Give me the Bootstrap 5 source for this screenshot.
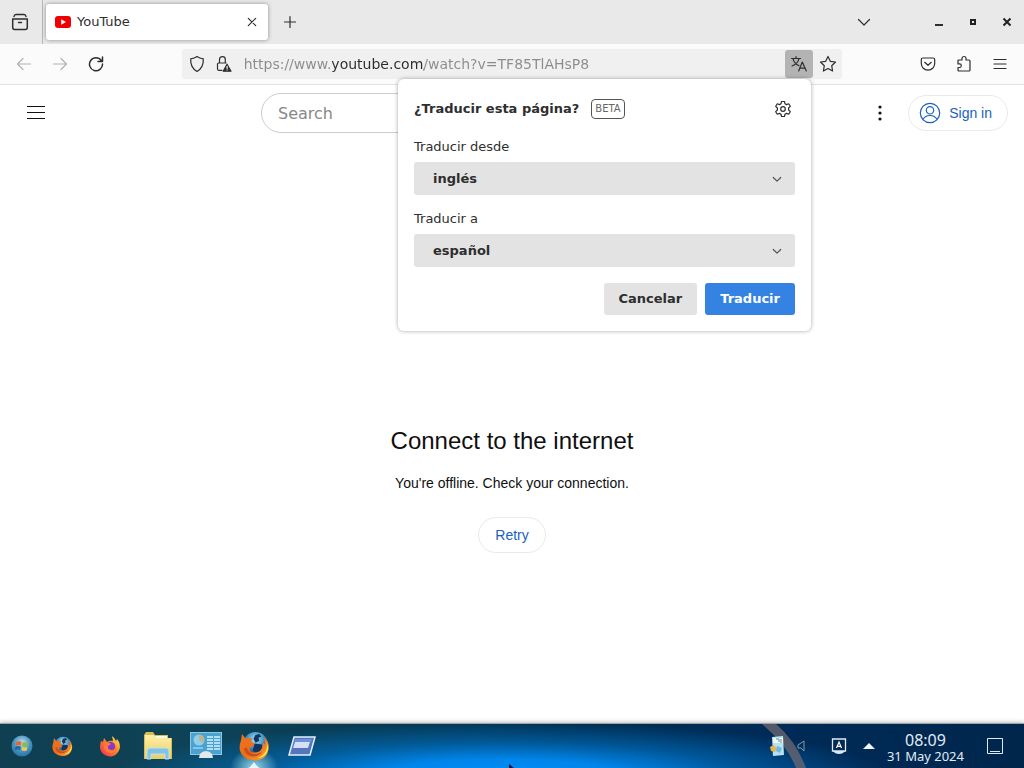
<!DOCTYPE html>
<html lang="es">
<head>
<meta charset="utf-8">
<meta name="viewport" content="width=device-width, initial-scale=1">
<title>YouTube</title>
<link href="https://cdn.jsdelivr.net/npm/bootstrap@5.3.0/dist/css/bootstrap.min.css" rel="stylesheet">
<style>
  :root { --chrome-font: "DejaVu Sans", sans-serif; --page-font: "Liberation Sans", Arial, sans-serif; --ink: #2e2e2e; --link: #1a62bd; }
  body { font-family: var(--page-font); color: #0f0f0f; background: #fff; }
  svg { display: block; flex: none; }
  .line-icon { fill: none; stroke: currentColor; stroke-width: 1.2; stroke-linecap: round; stroke-linejoin: round; }
  .browser-chrome { font-family: var(--chrome-font); font-size: 14px; color: var(--ink); position: relative; z-index: 10; }
  .tab-strip { height: 44px; background: #e9e9e9; }
  .icon-button { background: none; border: 0; padding: 0; color: inherit; display: flex; align-items: center; justify-content: center; flex: none; width: 36px; height: 28px; border-radius: 3px; }
  .view-button { width: 43px; height: 44px; border-right: 1px solid #b9b9b9; border-radius: 0; padding-right: 2px; }
  .page-tab { width: 222px; height: 36px; background: #fff; border-radius: 3px; box-shadow: 0 0 4px rgba(0,0,0,.4); font-size: 13px; margin-left: 3px; padding: 0 4px 0 9px; }
  .tab-name { margin-left: 6px; }
  .tabs-menu { margin-right: 32px; }
  .window-button { width: 34px; }
  .toolbar-row { height: 41px; background: #fbfbfb; border-bottom: 1px solid #e1e1e1; }
  .address { height: 30px; background: #f0f0f0; border-radius: 3px; position: relative; margin-left: 9px; }
  .address-input { border: 0; outline: 0; padding: 0; height: 28px; font-size: 14px; color: transparent; background: linear-gradient(90deg, #8b8b8b 88px, #2b2b2b 88px 180px, #8b8b8b 180px); -webkit-background-clip: text; background-clip: text; }
  .translate-toggle { width: 28px; background: #b3b3b3; }
  .nav-tools { padding-right: 6px; }
  .faded { opacity: .35; }
  .translate-panel { position: absolute; right: 31px; top: 30px; width: 413px; padding: 18px 16px 16px; background: #fff; border-radius: 6px; box-shadow: 0 0 4px rgba(0,0,0,.35); font-size: 13px; }
  .panel-head { margin-bottom: 14px; gap: 12px; }
  .panel-title { font-weight: 700; line-height: 24px; }
  .beta-tag { font-size: 10px; line-height: 18px; border: 1px solid #555; border-radius: 4px; padding: 0 3px; color: #666; }
  .panel-label { line-height: 24px; margin-bottom: 3px; }
  .language-select { appearance: none; border: 0; border-radius: 3px; background: #e3e3e3; color: var(--ink); font-weight: 700; height: 33px; width: 100%; padding: 0 19px; }
  .select-wrap { position: relative; margin-bottom: 12px; }
  .select-wrap svg { position: absolute; right: 13px; top: 12px; pointer-events: none; color: #555; }
  .panel-button { height: 32px; border: 0; border-radius: 3px; background: #e3e3e3; color: var(--ink); font-weight: 700; padding: 0 15px; }
  .panel-button.go { background: #3482e2; color: #fff; }
  .masthead { height: 56px; padding: 0 16px; }
  .search-box { font-family: var(--chrome-font); font-size: 16px; height: 40px; width: calc(50% + 6px); border: 1px solid #ccc; border-radius: 20px; padding: 0 16px; }
  .search-box::placeholder { color: #888; opacity: 1; }
  .pill { border: 1px solid #e9e9e9; border-radius: 20px; background: #fff; color: var(--link); font-size: 14px; height: 36px; padding: 0 16px; }
  .sign-link { padding: 0 15px 0 10px; text-decoration: none; }
  .offline { margin-bottom: 170px; }
  .offline h1 { font-size: 24px; font-weight: 400; line-height: 32px; margin-bottom: 16px; }
  .offline p { font-size: 14px; line-height: 20px; margin-bottom: 24px; }
  .desk-bar { height: 45px; position: relative; border-top: 1px solid #9da5a8; box-shadow: 0 -1px 4px rgba(0,0,0,.25); color: #e2ebf5; font-family: "Noto Sans", sans-serif;
    background: radial-gradient(ellipse 38% 125% at 49% 120%, #0090ff 0, #0085ea 32%, rgba(0,110,190,.65) 62%, rgba(0,70,130,0) 100%),
      linear-gradient(90deg, #0f3f51 0, #0e4357 20%, #083b52 34%, #002f50 55%, #002b58 75%, #00264c 100%); }
  .launch { width: 48px; height: 44px; }
  .start-button { width: 38px; padding-left: 6px; }
  .light-ray { position: absolute; right: 0; bottom: 0; width: 270px; height: 44px; pointer-events: none; }
  .pointer-tip { position: absolute; left: 50%; bottom: 0; margin-left: -4px; }
  .active-app { position: relative; background: radial-gradient(ellipse 24px 20px at 50% 100%, #9bd7e5 0, rgba(80,170,200,0) 100%); }
  .active-mark { position: absolute; left: 50%; bottom: 0; margin-left: -6px; }
  .tray { position: relative; padding-right: 21px; }
  .clock { margin: 0 23px 0 12px; }
  .clock-time { font-size: 16px; line-height: 20px; }
  .clock-date { font-size: 13px; line-height: 13px; }
</style>
</head>
<body class="d-flex flex-column min-vh-100">
<header class="browser-chrome">
  <div class="tab-strip d-flex align-items-center">
    <button class="icon-button view-button" aria-label="Vista de Firefox"><svg class="line-icon" style="stroke-width:1.500" width="18" height="18" viewBox="0 0 18 18"><path d="M5 1.500h8Q14.700 1.500 15 3.500M5 1.500Q3.300 1.500 3 3.500"/><path d="M1.700 6h14.600v8.500q0 2-2 2H3.700q-2 0-2-2zM7.500 9.500h3"/></svg></button>
    <div class="page-tab d-flex align-items-center">
      <svg width="16" height="16" viewBox="0 0 16 16"><rect y="2" width="16" height="12" rx="3" fill="#f00000"/><path d="M6.200 5.200v5.600L11 8z" fill="#fff"/></svg>
      <span class="tab-name">YouTube</span>
      <button class="icon-button ms-auto" style="width:24px" aria-label="Cerrar pestaña"><svg class="line-icon" width="10" height="10" viewBox="0 0 10 10"><path d="M1.300 1.300l7.400 7.400M8.700 1.300L1.300 8.700"/></svg></button>
    </div>
    <button class="icon-button ms-1" aria-label="Nueva pestaña"><svg class="line-icon" width="14" height="14" viewBox="0 0 14 14"><path d="M7 1.500v11M1.500 7h11"/></svg></button>
    <button class="icon-button tabs-menu ms-auto" aria-label="Listar pestañas"><svg class="line-icon" width="14" height="14" viewBox="0 0 14 14"><path d="M1.500 4.500L7 10l5.500-5.500"/></svg></button>
    <button class="icon-button window-button ms-2" aria-label="Minimizar"><svg width="10" height="10" viewBox="0 0 10 10"><path d="M1 7h8v2H1z" fill="currentColor"/></svg></button>
    <button class="icon-button window-button" aria-label="Maximizar"><svg width="8" height="8" viewBox="0 0 8 8"><path d="M2 2h4v4H2z" fill="none" stroke="#222" stroke-width="2"/></svg></button>
    <button class="icon-button window-button" aria-label="Cerrar"><svg width="10" height="10" viewBox="0 0 10 10"><path d="M1.500 1.500l7 7M8.500 1.500l-7 7" stroke="#222" stroke-width="2"/></svg></button>
  </div>
  <nav class="toolbar-row d-flex align-items-center">
    <div class="d-flex col-2 ps-1" style="margin-left:2px">
      <button class="icon-button faded" disabled aria-label="Atrás"><svg class="line-icon" width="16" height="16" viewBox="0 0 16 16"><path d="M14.500 8H1.500M7 2.500L1.500 8 7 13.500"/></svg></button>
      <button class="icon-button faded" disabled aria-label="Adelante"><svg class="line-icon" width="16" height="16" viewBox="0 0 16 16"><path d="M1.500 8h13M9 2.500L14.500 8 9 13.500"/></svg></button>
      <button class="icon-button" aria-label="Recargar"><svg class="line-icon" style="stroke-width:1.500" width="16" height="16" viewBox="0 0 16 16"><path d="M13.300 4.500A6.500 6.500 0 1 0 14.500 8M14.500 1v4.500H10"/></svg></button>
    </div>
    <div class="address d-flex align-items-center flex-grow-1" role="search">
      <button class="icon-button" style="width:30px" aria-label="Protección"><svg class="line-icon" width="16" height="18" viewBox="0 0 16 18"><path d="M8 1.500c2 1.500 4 2 6.300 2.300.3 5.700-1.500 10-6.300 12.700C3.200 13.800 1.400 9.500 1.700 3.800 4 3.500 6 3 8 1.500z"/></svg></button>
      <button class="icon-button me-2" style="width:24px" aria-label="Conexión"><svg class="line-icon" width="16" height="18" viewBox="0 0 16 18"><path d="M6 15.300H2.700c-.7 0-1.200-.5-1.200-1.200V9.200c0-.7.500-1.200 1.200-1.200H10M3.500 8V4.500a2.900 2.900 0 0 1 5.800 0V8"/><path d="M11 9.200L7.200 16.200h7.800z" fill="currentColor"/><path d="M11.100 11.300v2M11.100 14.900v.1" stroke="#fff"/></svg></button>
      <input class="address-input flex-grow-1" aria-label="Dirección" value="https://www.youtube.com/watch?v=TF85TlAHsP8">
      <button class="icon-button translate-toggle" aria-label="Traducir"><svg class="line-icon" width="18" height="18" viewBox="0 0 18 18"><path d="M1.500 3.500h9M6 1.500v2M3 3.700c.8 3.500 3.500 6 6 7M9 3.700c-.8 3.500-3.500 6-7 7.300M8.700 16l3.600-9 4 9M10 13.200h5"/></svg></button>
      <button class="icon-button" style="width:29px" aria-label="Marcador"><svg class="line-icon" width="18" height="18" viewBox="0 0 18 18"><path d="M9 1.500l2.300 4.800 5.200.7-3.800 3.700.9 5.300L9 13.500 4.400 16l.9-5.300L1.500 7l5.200-.7z"/></svg></button>
      <section class="translate-panel" aria-label="Traducir esta página">
        <div class="panel-head d-flex align-items-center">
          <strong class="panel-title">¿Traducir esta página?</strong><span class="beta-tag">BETA</span>
          <button class="icon-button ms-auto" style="width:24px;height:24px" aria-label="Ajustes"><svg class="line-icon" width="18" height="18" viewBox="0 0 18 18"><path d="M7.500 1.500h3l.5 2.300 1.500.8 2.200-.8 1.600 2.500-1.700 1.700v2l1.700 1.700-1.600 2.500-2.200-.8-1.500.8-.5 2.300h-3L7 14.200l-1.500-.8-2.200.8-1.600-2.500L3.400 10V8L1.700 6.300l1.600-2.500 2.200.8L7 3.800z"/><circle cx="9" cy="9" r="2.300"/></svg></button>
        </div>
        <label class="panel-label d-block" for="from">Traducir desde</label>
        <div class="select-wrap"><select class="language-select" id="from"><option>inglés</option></select><svg class="line-icon" width="10" height="10" viewBox="0 0 10 10"><path d="M1.300 3.500L5 7.200 8.700 3.500"/></svg></div>
        <label class="panel-label d-block" for="to">Traducir a</label>
        <div class="select-wrap mb-3"><select class="language-select" id="to"><option>español</option></select><svg class="line-icon" width="10" height="10" viewBox="0 0 10 10"><path d="M1.300 3.500L5 7.200 8.700 3.500"/></svg></div>
        <div class="d-flex justify-content-end gap-2"><button class="panel-button">Cancelar</button><button class="panel-button go">Traducir</button></div>
      </section>
    </div>
    <div class="nav-tools d-flex ms-5 ps-3">
      <button class="icon-button ms-1" aria-label="Pocket"><svg class="line-icon" width="16" height="16" viewBox="0 0 16 16"><path d="M3 2h10q1.700 0 1.700 1.700V7.500a6.700 6.700 0 0 1-13.400 0V3.700Q1.300 2 3 2zM4.700 6.300L8 9.300l3.300-3"/></svg></button>
      <button class="icon-button" aria-label="Extensiones"><svg class="line-icon" width="16" height="18" viewBox="0 0 16 18"><path d="M2.500 5H6V3.500a2 2 0 0 1 4 0V5h3q1 0 1 1v9q0 1-1 1H3q-1 0-1-1v-2.500h1.500a1.800 1.800 0 0 0 0-3.600H2V5.500z"/></svg></button>
      <button class="icon-button" aria-label="Menú"><svg class="line-icon" width="14" height="14" viewBox="0 0 14 14"><path d="M1 2.500h12M1 7h12M1 11.500h12"/></svg></button>
    </div>
  </nav>
</header>

<div class="masthead d-flex align-items-center justify-content-between">
  <div class="d-flex col-2"><button class="icon-button" style="width:40px" aria-label="Guide"><svg width="20" height="14" viewBox="0 0 20 14"><path d="M1 .5h18M1 6.500h18M1 12.500h18" stroke="#111" stroke-width="1"/></svg></button></div>
  <input class="search-box" type="search" placeholder="Search" aria-label="Search">
  <div class="d-flex align-items-center justify-content-end col-2">
    <button class="icon-button me-2" style="width:40px" aria-label="Settings"><svg width="4" height="16" viewBox="0 0 4 16" fill="#111"><circle cx="2" cy="2" r="1.600"/><circle cx="2" cy="8" r="1.600"/><circle cx="2" cy="14" r="1.600"/></svg></button>
    <a class="pill sign-link d-flex align-items-center gap-2 text-nowrap" href="#"><svg width="22" height="22" viewBox="0 0 22 22" fill="none" stroke="currentColor" stroke-width="1.200"><circle cx="11" cy="11" r="9.700"/><circle cx="11" cy="8.300" r="3.700"/><path d="M4 17.500c1.500-3 4-4 7-4s5.500 1 7 4"/></svg>Sign in</a>
  </div>
</div>

<main class="flex-grow-1 d-flex flex-column justify-content-end align-items-center">
  <div class="offline text-center"><h1>Connect to the internet</h1><p>You're offline. Check your connection.</p><button class="pill">Retry</button></div>
</main>

<footer class="desk-bar d-flex align-items-center">
  <svg width="0" height="0" style="position:absolute" aria-hidden="true">
    <defs>
      <radialGradient id="globe" cx=".5" cy=".3" r=".7"><stop stop-color="#a9e3f8"/><stop offset=".5" stop-color="#3f8ec4"/><stop offset="1" stop-color="#0a2f63"/></radialGradient>
      <radialGradient id="orb" cx=".5" cy=".35" r=".65"><stop stop-color="#c4e2ef"/><stop offset=".6" stop-color="#4793c0"/><stop offset="1" stop-color="#2774a4"/></radialGradient>
      <linearGradient id="fur" x1="0" y1="0" x2="1" y2="1"><stop stop-color="#ee7420"/><stop offset=".5" stop-color="#ee6c17"/><stop offset="1" stop-color="#f2ab3a"/></linearGradient>
      <linearGradient id="flame" x1="1" y1="0" x2="0" y2="1"><stop stop-color="#fff04a"/><stop offset=".5" stop-color="#ff7a28"/><stop offset="1" stop-color="#ef2862"/></linearGradient>
      <linearGradient id="paper" x1="0" y1="0" x2="0" y2="1"><stop stop-color="#fff0a8"/><stop offset="1" stop-color="#e8cd61"/></linearGradient>
      <symbol id="classic-fox" viewBox="0 0 32 32"><circle cx="17" cy="14" r="13" fill="url(#globe)"/><path d="M17 4l4-1 2 3-3 1 1 3-4 2-2-4zM16 13l8 1 1 6-6 4-5-4z" fill="#0f3560"/><path d="M2 10L3 3l4 5c2-1 5-1 7 0l-2 3 4 2-1 3-4 1c-1 4 3 6 7 5 5-1 7-5 6-10l3 2c0-4-1-6-2-8 5 3 7 9 5 15-2 7-9 11-17 9C3 28-2 20 2 10z" fill="url(#fur)"/><path d="M8 17c2 7 10 9 16 4-4 8-17 7-19-3z" fill="#d04d15"/><path d="M28 11c3 7-2 15-9 17 9 0 14-9 9-17z" fill="#ffe24e"/></symbol>
    </defs>
  </svg>
  <svg class="light-ray" viewBox="0 0 270 44" aria-hidden="true"><path d="M8 0h14Q42 17 52 44H42Q34 22 8 0z" fill="#6f6a70" opacity=".75"/></svg>
  <nav class="d-flex" aria-label="Aplicaciones">
    <button class="icon-button launch start-button" aria-label="Inicio"><svg width="22" height="22" viewBox="0 0 22 22"><circle cx="11" cy="11" r="10.500" fill="url(#orb)"/><path d="M5 7q3-1.500 5.500-.2L10 10.500Q7 9.500 4.500 10.700z" fill="#e8662c"/><path d="M11.500 7Q14 8.200 17 7l-.5 3.700Q14 12 11 10.700z" fill="#8fb84b"/><path d="M4.300 11.700Q7 10.500 9.800 11.500L9.300 15Q7 14 3.800 15z" fill="#1c69a8"/><path d="M11 12q2.500 1 5.400 0l-.6 3.500q-2.500 1-5.200-.2z" fill="#f7ca44"/></svg></button>
    <button class="icon-button launch" aria-label="Firefox"><svg width="21" height="21"><use href="#classic-fox"/></svg></button>
    <button class="icon-button launch" aria-label="Firefox Browser"><svg width="22" height="22" viewBox="0 0 22 22"><path d="M2 6l2 1 1-4 3 4q3-2 6-1l-1-5q3 2 4 5l1-2q4 5 2.500 10C19 19 15 21.500 11 21.500S1 18 1 12q0-3 1-6z" fill="url(#flame)"/><circle cx="11.500" cy="11.500" r="4.700" fill="#8a39c7"/><path d="M5 8q4-2 7 1l-3 2q-1 4 4 4 4 0 4-4c2 5-1 7-5 7-5 0-8-4-7-10z" fill="#ff7a38"/></svg></button>
    <button class="icon-button launch" aria-label="Archivos"><svg width="30" height="30" viewBox="0 0 30 30"><path d="M1 4l2-3h7l2 3h13v3h4v21H1z" fill="#d8bd57"/><path d="M2 4h9l2 3h15v21H2z" fill="url(#paper)"/><path d="M12 5h12v2H13z" fill="#fffbe2"/><path d="M4 20q0-3 3-3h16q3 0 3 3v8h-4v-5H8v5H4z" fill="#82c2e5" stroke="#b9e3f2"/></svg></button>
    <button class="icon-button launch" aria-label="Panel"><svg width="32" height="28" viewBox="0 0 32 28"><rect x=".5" y=".5" width="31" height="22" fill="#4ba2d1" stroke="#8cc9e2"/><circle cx="9" cy="8" r="5.500" fill="#8dd0ec"/><path d="M9 8V2.500a5.500 5.500 0 0 1 4.500 8.500z" fill="#c5b187"/><path d="M17 5h13M17 8h13M17 11h13M17 14h13M17 17h13" stroke="#d5f3fb" stroke-width="1.500" stroke-dasharray="6 1"/><path d="M3 16h10" stroke="#bce9f5"/><path d="M9 26q0-6 7-7 7 1 7 7z" fill="#e5e8eb"/></svg></button>
    <button class="icon-button launch active-app" aria-label="Firefox abierto"><svg width="31" height="31"><use href="#classic-fox"/></svg><svg class="active-mark" width="12" height="6" viewBox="0 0 12 6"><path d="M0 6q3-1 6-6 3 5 6 6z" fill="#e8f7fa"/></svg></button>
    <button class="icon-button launch" aria-label="Ejecutar"><svg width="28" height="20" viewBox="0 0 28 20"><path d="M6 1h21l-5 18H1z" fill="#5575bd" stroke="#e4f0ff" stroke-width="1.500"/><path d="M7 3h17l-1 3H6z" fill="#6f92d6"/><path d="M7 6h15l-2 6H5z" fill="#d5e0f8"/></svg></button>
  </nav>
  <svg class="pointer-tip" width="8" height="4" viewBox="0 0 8 4"><path d="M1 4V0l5 4z" fill="#06133e"/></svg>
  <div class="tray d-flex align-items-center ms-auto">
    <svg class="me-2" width="18" height="20" viewBox="0 0 18 20"><path d="M3 1l11-1 1 19-11 1z" fill="#b8e1f2"/><path d="M4 2h10v5H4z" fill="#e9f8fb"/><path d="M7 3h3v3M12 3v4" fill="none" stroke="#688f87"/><path d="M1 11l4-2 3 4-2 3-4-1z" fill="#e8b750"/><path d="M8 10l5 2-2 5-4-2z" fill="#70b9df"/></svg>
    <svg class="me-4" width="12" height="12" viewBox="0 0 12 12" fill="none" stroke="#8b96a2"><path d="M3 5l6-4v10L6 8H3z"/></svg>
    <svg class="me-3" width="16" height="18" viewBox="0 0 16 18"><path d="M1.500 2h13v12h-13z" fill="none" stroke="#e0edf8" stroke-width="1.300"/><path d="M2 14h12q-2 3-6 3t-6-3z" fill="#d8e8f5"/><path d="M5.500 11L8 5l2.500 6M6.300 9.300h3.400" stroke="#fff" fill="none" stroke-width="1.200"/></svg>
    <svg width="12" height="8" viewBox="0 0 12 8"><path d="M0 7l6-6 6 6z" fill="#eef4fa"/></svg>
    <div class="clock text-center"><div class="clock-time">08:09</div><div class="clock-date">31 May 2024</div></div>
    <svg width="16" height="18" viewBox="0 0 16 18" fill="none" stroke="#dfeaf5"><path d="M.5 1.500h15v15H.5zM3 14.500h10"/></svg>
  </div>
</footer>
<script src="https://cdn.jsdelivr.net/npm/bootstrap@5.3.0/dist/js/bootstrap.bundle.min.js"></script>
</body>
</html>
